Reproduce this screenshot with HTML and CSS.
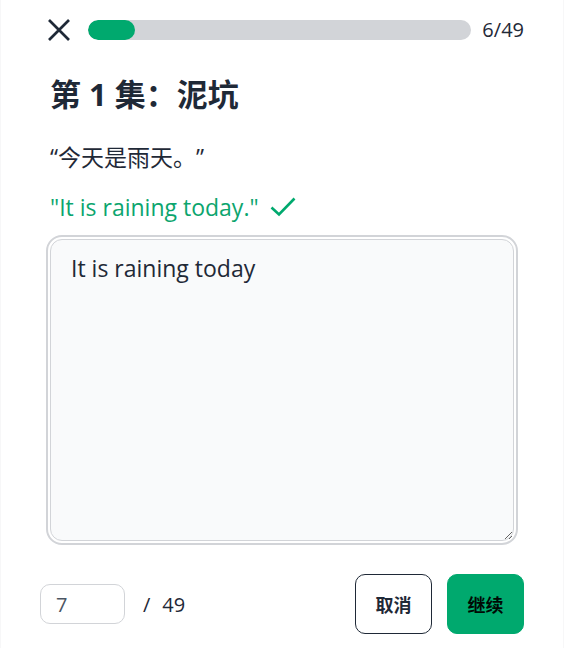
FILE: index.html
```html
<!DOCTYPE html>
<html lang="zh-CN">
<head>
<meta charset="utf-8">
<meta name="viewport" content="width=device-width, initial-scale=1">
<title>第 1 集：泥坑</title>
<link rel="stylesheet" href="styles.css">
</head>
<body>
<main class="lesson">
  <header class="topbar">
    <button class="close" type="button" aria-label="关闭">
      <svg viewBox="0 0 24 24" width="24" height="24" fill="none" stroke="currentColor" stroke-width="2.7"><path d="M2 2 22 22M22 2 2 22"/></svg>
    </button>
    <div class="progress" role="progressbar" aria-label="进度" aria-valuemin="0" aria-valuemax="49" aria-valuenow="6">
      <div class="progress-fill" style="width: 12.2%"></div>
    </div>
    <span class="count">6/49</span>
  </header>
  <section class="exercise">
    <h1 class="title">第 1 集：泥坑</h1>
    <p class="prompt">“今天是雨天。”</p>
    <p class="answer">"It is raining today."
      <svg class="check" viewBox="0 0 26 20" width="26" height="20" fill="none" stroke="currentColor" stroke-width="2.6" aria-hidden="true"><path d="M1.5 10.5 9 17.5 24.5 1.5"/></svg>
    </p>
    <textarea class="entry" aria-label="翻译">It is raining today</textarea>
  </section>
  <footer class="footer">
    <input class="page" type="text" inputmode="numeric" value="7" aria-label="题号">
    <span class="total"><span>/</span><span>49</span></span>
    <div class="actions">
      <button class="btn btn-outline" type="button">取消</button>
      <button class="btn btn-primary" type="button">继续</button>
    </div>
  </footer>
</main>
</body>
</html>
```
FILE: styles.css
```css
* {
  box-sizing: border-box;
}

body {
  margin: 0;
  background: #fff;
  color: #1f2937;
  font-family: "Open Sans", "Noto Sans CJK SC", sans-serif;
  text-spacing-trim: space-all;
}

.lesson {
  display: flex;
  flex-direction: column;
  min-height: 100vh;
  padding: 10px 39px 14px;
  border: solid #f7f7f8;
  border-width: 0 1px;
}

.topbar {
  display: flex;
  align-items: center;
  height: 40px;
}

.close {
  display: flex;
  margin: 0 17px 0 7px;
  padding: 0;
  border: 0;
  background: none;
  color: inherit;
}

.progress {
  flex: 1;
  height: 20px;
  border-radius: 10px;
  background: #d2d4d8;
  overflow: hidden;
}

.progress-fill {
  height: 100%;
  border-radius: 10px;
  background: #00a96e;
}

.count {
  margin-left: 11px;
  font-size: 20px;
  line-height: 24px;
}

.exercise {
  display: flex;
  flex: 1;
  flex-direction: column;
  padding: 20px 10px 0;
}

.title {
  margin: 0;
  font-size: 31px;
  font-weight: 700;
  line-height: 48px;
}

.prompt,
.answer {
  margin: 0;
  font-size: 23px;
  line-height: 50px;
}

.prompt {
  margin-top: 14px;
}

.answer {
  display: flex;
  align-items: center;
  gap: 11px;
  color: #0ca56e;
}

.check {
  color: #00a96e;
}

.entry {
  flex: 1;
  margin: 7px 0 33px;
  padding: 8px 20px;
  border: 1px solid #d2d4d8;
  border-radius: 12px;
  outline: 2px solid #d2d4d8;
  outline-offset: 2px;
  background: #f9fafb;
  color: inherit;
  font: inherit;
  font-size: 23px;
  line-height: 40px;
  resize: vertical;
}

.footer {
  display: flex;
  align-items: center;
}

.page {
  width: 85px;
  height: 40px;
  padding: 0 15px;
  border: 1px solid #d2d4d8;
  border-radius: 10px;
  background: #fff;
  color: #4b5563;
  font: inherit;
  font-size: 20px;
}

.total {
  display: flex;
  gap: 12px;
  margin-left: 18px;
  font-size: 20px;
}

.actions {
  display: flex;
  gap: 15px;
  margin-left: auto;
}

.btn {
  width: 77px;
  height: 60px;
  padding: 0;
  border: 1px solid #1f2937;
  border-radius: 10px;
  background: #fff;
  color: #1f2937;
  font: inherit;
  font-size: 18px;
  font-weight: 700;
}

.btn-primary {
  border-color: #00a96e;
  background: #00a96e;
  color: #000a04;
}
```
